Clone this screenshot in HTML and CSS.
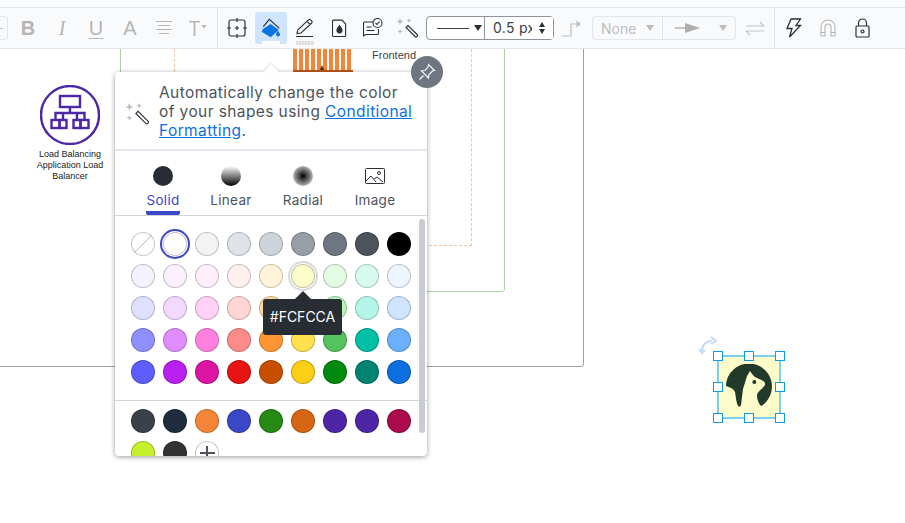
FILE: index.html
```html
<!DOCTYPE html>
<html>
<head>
    <title>Fill Color</title>
    <link rel="stylesheet" href="styles.css">
</head>
<body>
    <div class="top-strip"></div>
    <div class="toolbar">
        <div class="font-stub"><span class="stub-dash"></span></div>
        <div class="group text-group">
            <button class="tool muted bold-letter">B</button>
            <button class="tool muted italic-letter">I</button>
            <button class="tool muted underline-letter">U</button>
            <button class="tool muted plain-letter">A</button>
            <button class="tool muted">
                <svg width="16" height="14" viewBox="0 0 16 14" fill="none" stroke="#b5b5b5"><path d="M0 .5h16M2 4.500h12M0 8.500h16M3 12.500h10"/></svg>
            </button>
            <button class="tool muted">
                <svg width="18" height="16" viewBox="0 0 18 16"><path d="M0 1h11v1.600H6.400V16H4.600V2.600H0z" fill="#b5b5b5"/><path d="M12.500 5h5l-2.500 3.500z" fill="#b5b5b5"/></svg>
            </button>
        </div>
        <div class="group shape-group">
            <button class="tool">
                <svg width="20" height="20" viewBox="0 0 20 20" fill="none" stroke="#2b2f36" stroke-width="1.200"><rect x="2" y="2" width="16" height="16" rx="2"/><path d="M10 0v4M10 16v4M0 10h4M16 10h4M10 8v4M8 10h4"/></svg>
            </button>
            <button class="tool active">
                <svg width="22" height="22" viewBox="0 0 22 22"><path d="M3 12l7.700-5 8 6-8 7.300-9-5.600z" fill="#0b74e5"/><path d="M3.300 9.700l6-7.400 10 9" fill="none" stroke="#2b2f36" stroke-width="1.100"/><path d="M18 14c1.300 1.700 2 2.500 2 3.400a2 2 0 0 1-4 0c0-.9.700-1.700 2-3.400z" fill="#0b74e5"/></svg>
                <span class="fill-chip"></span>
            </button>
            <button class="tool">
                <svg width="20" height="20" viewBox="0 0 20 20" fill="none" stroke="#2b2f36" stroke-width="1.100"><path d="M2 15.500l.8-3.700L13.500 1.800a1.400 1.400 0 0 1 2 0l1.200 1.200a1.400 1.400 0 0 1 0 2L6 15zM12 3.300l3.200 3.200M1 18.500h17"/></svg>
                <span class="stroke-chip"></span>
            </button>
            <button class="tool">
                <svg width="15" height="19" viewBox="0 0 16 20"><path d="M1.500 1h9l4 4v12.500a1 1 0 0 1-1 1h-12a1 1 0 0 1-1-1V2a1 1 0 0 1 1-1z" fill="none" stroke="#2b2f36" stroke-width="1.200"/><path d="M8 6c2.200 2.800 3.300 4.300 3.300 5.900a3.300 3.300 0 0 1-6.600 0C4.700 10.300 5.800 8.800 8 6z" fill="#2b2f36"/></svg>
            </button>
            <button class="tool">
                <svg width="20" height="20" viewBox="0 0 20 20" fill="none" stroke="#2b2f36" stroke-width="1.100"><path d="M10 4H1.500a1 1 0 0 0-1 1v13l2-1.500h12a1 1 0 0 0 1-1V11M3.500 9h5M3.500 12.500h8"/><circle cx="14.500" cy="5" r="4.500"/><path d="M12.500 5l1.500 1.500 2.500-2.800"/></svg>
            </button>
            <button class="tool">
                <svg width="22" height="22" viewBox="0 0 22 22"><path d="M10 10.500l2-2 9 9a1.400 1.400 0 0 1-2 2z" fill="none" stroke="#2b2f36" stroke-width="1.100"/><path d="M4 1l1 2.500L7.500 4.500 5 5.500 4 8 3 5.500.500 4.500 3 3.500zM13 1l.8 1.700L15.500 3.500l-1.700.8L13 6l-.8-1.700-1.700-.8 1.700-.8zM4 12l.8 1.700 1.700.8-1.700.8L4 17l-.8-1.700-1.700-.8 1.700-.8z" fill="#b9bdc3"/></svg>
            </button>
        </div>
        <div class="line-control">
            <div class="line-style"><span class="line-sample"></span><span class="caret dark"></span></div>
            <div class="line-width">0.5 px<span class="spinner"><span class="spin-up"></span><span class="spin-down"></span></span></div>
        </div>
        <button class="tool elbow">
            <svg width="20" height="18" viewBox="0 0 20 18" fill="none" stroke="#bdbdbd" stroke-width="1.200"><path d="M0 17h9V5h6"/><path d="M14.500 1.500L19 5l-4.500 3.500z" fill="#bdbdbd" stroke="none"/></svg>
        </button>
        <div class="ends">
            <div class="end-left">None<span class="caret"></span></div>
            <div class="end-right">
                <svg width="26" height="10" viewBox="0 0 26 10"><path d="M0 4.300h12v1.400H0z" fill="#aeaeae"/><path d="M10 0l15 5-15 5z" fill="#aeaeae"/></svg>
                <span class="caret"></span>
            </div>
        </div>
        <button class="tool swap">
            <svg width="20" height="15" viewBox="0 0 20 15" fill="none" stroke="#c4c4c4" stroke-width="1.100"><path d="M1 5h18l-4-4M19 10H1l4 4"/></svg>
        </button>
        <div class="group right-group">
            <button class="tool">
                <svg width="16" height="20" viewBox="0 0 16 20" fill="none" stroke="#2b2f36" stroke-width="1.300"><path d="M5 1h9.500L10 7.500h4.500L3.500 19 6 10.500H1z"/></svg>
            </button>
            <button class="tool">
                <svg width="16" height="18" viewBox="0 0 16 18" fill="none" stroke="#b5b5b5" stroke-width="1.100"><path d="M1 17V8a7 7 0 0 1 14 0v9h-4V8a3 3 0 0 0-6 0v9zM1 13.500h4M11 13.500h4"/></svg>
            </button>
            <button class="tool">
                <svg width="15" height="20" viewBox="0 0 15 20" fill="none" stroke="#2b2f36" stroke-width="1.200"><rect x="1" y="8" width="13" height="11" rx="1"/><path d="M3.500 8V5a4 4 0 0 1 8 0v3"/><circle cx="7.500" cy="13.500" r="1.500"/></svg>
            </button>
        </div>
    </div>

    <div class="canvas">
        <div class="box box-gray"></div>
        <div class="box box-green"></div>
        <div class="box box-dashed"></div>
        <div class="server-stripes"></div>
        <div class="frontend-label">Frontend</div>

        <div class="lb-node">
            <svg width="60" height="60" viewBox="0 0 60 60" fill="none" stroke="#4d27a8" stroke-width="2.400">
                <circle cx="30" cy="30" r="29"/>
                <rect x="20" y="11" width="20" height="11"/>
                <path d="M30 22v6M30 28H15.500v6M30 28h14.500v6M23 34v-6M37 34v-6"/>
                <rect x="11.500" y="35" width="8" height="8"/>
                <rect x="19.500" y="35" width="7" height="8"/>
                <rect x="33.500" y="35" width="7" height="8"/>
                <rect x="40.500" y="35" width="8" height="8"/>
            </svg>
            <div class="lb-label">Load Balancing Application Load Balancer</div>
        </div>

        <svg class="rotate-handle" width="20" height="20" viewBox="0 0 20 20" fill="none" stroke="#c3dbfa" stroke-width="2"><path d="M4 15C4 9 8 5 14 5"/><path d="M13 1l5 4-5 3M1 13l3 4 3-3"/></svg>
        <div class="selected-shape">
            <svg class="llama" width="46" height="44" viewBox="0 0 46 44">
                <path d="M0 21A23 23 0 1 1 36 41.500L35 42C33 40 31 36 31 32C31 27 37 25 39 21C40 18 36 16 31 14C28 13 26 10 24 7L21 12L17 25L15 41C14 43 13 43 12 42C10 38 10 33 9 28C8 25 5 23.500 0 22Z" fill="#23392a"/>
                <circle cx="28.300" cy="18" r="2" fill="#23392a"/>
            </svg>
            <span class="handle h-tl"></span>
            <span class="handle h-tc"></span>
            <span class="handle h-tr"></span>
            <span class="handle h-ml"></span>
            <span class="handle h-mr"></span>
            <span class="handle h-bl"></span>
            <span class="handle h-bc"></span>
            <span class="handle h-br"></span>
        </div>
    </div>

    <div class="panel">
        <span class="panel-arrow"></span>
        <button class="pin">
            <svg width="18" height="18" viewBox="0 0 18 18" fill="none" stroke="#fff" stroke-width="1.100"><path d="M10.500 1.500l6 6-2 .5-3.500 3.500-.5 3.500-7-7L7 7.500 10 4zM5.500 12.500L1.500 16.500"/></svg>
        </button>
        <div class="panel-body">
            <div class="promo">
                <svg class="promo-icon" width="24" height="24" viewBox="0 0 22 22"><path d="M10 10.500l2-2 9 9a1.400 1.400 0 0 1-2 2z" fill="none" stroke="#2b2f36" stroke-width="1"/><path d="M4 1l1 2.500L7.500 4.500 5 5.500 4 8 3 5.500.500 4.500 3 3.500zM13 1l.8 1.700L15.500 3.500l-1.700.8L13 6l-.8-1.700-1.700-.8 1.700-.8zM4 12l.8 1.700 1.700.8-1.700.8L4 17l-.8-1.700-1.700-.8 1.700-.8z" fill="#b9bdc3"/></svg>
                <p>Automatically change the color of your shapes using <a href="#">Conditional Formatting</a>.</p>
            </div>
            <div class="tabs">
                <div class="tab selected"><span class="tab-icon solid"></span>Solid</div>
                <div class="tab"><span class="tab-icon linear"></span>Linear</div>
                <div class="tab"><span class="tab-icon radial"></span>Radial</div>
                <div class="tab">
                    <svg class="tab-image" width="20" height="20" viewBox="0 0 20 20" fill="none" stroke="#2b2f36" stroke-width="1"><rect x=".5" y="2.500" width="19" height="15" rx="1"/><circle cx="14" cy="7" r="1.500"/><path d="M1 15l5-5 5 6M9 13l3-2 6 5"/></svg>
                    Image
                </div>
            </div>
            <div class="colors">
                <div class="swatches">
                    <span class="swatch none-color"></span>
                    <span class="swatch current" style="background:#fff"></span>
                    <span class="swatch" style="background:#f1f3f5"></span>
                    <span class="swatch" style="background:#dfe3e8"></span>
                    <span class="swatch" style="background:#ced4db"></span>
                    <span class="swatch" style="background:#979ea8"></span>
                    <span class="swatch" style="background:#6f7681"></span>
                    <span class="swatch" style="background:#4c535d"></span>
                    <span class="swatch" style="background:#000"></span>

                    <span class="swatch" style="background:#f2f3ff"></span>
                    <span class="swatch" style="background:#fbf0ff"></span>
                    <span class="swatch" style="background:#ffeffb"></span>
                    <span class="swatch" style="background:#fff0f0"></span>
                    <span class="swatch" style="background:#fff3d9"></span>
                    <span class="swatch hovered" style="background:#fcfcca"></span>
                    <span class="swatch" style="background:#e3fae3"></span>
                    <span class="swatch" style="background:#d6faf0"></span>
                    <span class="swatch" style="background:#edf5ff"></span>

                    <span class="swatch" style="background:#dfe0ff"></span>
                    <span class="swatch" style="background:#f2d9ff"></span>
                    <span class="swatch" style="background:#ffd1f5"></span>
                    <span class="swatch" style="background:#ffd5d5"></span>
                    <span class="swatch" style="background:#ffd9a0"></span>
                    <span class="swatch" style="background:#fff59e"></span>
                    <span class="swatch" style="background:#b8f5b8"></span>
                    <span class="swatch" style="background:#b5f5e8"></span>
                    <span class="swatch" style="background:#cfe4ff"></span>

                    <span class="swatch" style="background:#8f8fff"></span>
                    <span class="swatch" style="background:#e08cff"></span>
                    <span class="swatch" style="background:#ff80df"></span>
                    <span class="swatch" style="background:#ff8a8a"></span>
                    <span class="swatch" style="background:#ff9533"></span>
                    <span class="swatch" style="background:#ffe14d"></span>
                    <span class="swatch" style="background:#54c25e"></span>
                    <span class="swatch" style="background:#00bfa5"></span>
                    <span class="swatch" style="background:#6bb0ff"></span>

                    <span class="swatch" style="background:#5e5eff"></span>
                    <span class="swatch" style="background:#b81ff0"></span>
                    <span class="swatch" style="background:#dc14a3"></span>
                    <span class="swatch" style="background:#e81313"></span>
                    <span class="swatch" style="background:#c94f00"></span>
                    <span class="swatch" style="background:#fccf14"></span>
                    <span class="swatch" style="background:#008a0e"></span>
                    <span class="swatch" style="background:#008573"></span>
                    <span class="swatch" style="background:#0c6fe0"></span>
                </div>
                <div class="divider"></div>
                <div class="swatches">
                    <span class="swatch" style="background:#3a414a"></span>
                    <span class="swatch" style="background:#1f2d3f"></span>
                    <span class="swatch" style="background:#f58536"></span>
                    <span class="swatch" style="background:#3a48c8"></span>
                    <span class="swatch" style="background:#268a15"></span>
                    <span class="swatch" style="background:#d66613"></span>
                    <span class="swatch" style="background:#4d26a8"></span>
                    <span class="swatch" style="background:#4d26a8"></span>
                    <span class="swatch" style="background:#ab0a4d"></span>

                    <span class="swatch" style="background:#c6f02e"></span>
                    <span class="swatch" style="background:#333"></span>
                    <span class="swatch add-color"></span>
                </div>
                <div class="scrollbar"></div>
            </div>
        </div>
        <div class="tooltip">#FCFCCA</div>
    </div>
</body>
</html>
```

FILE: styles.css
```css
html, body {
    margin: 0;
    padding: 0;
}

body {
    width: 905px;
    height: 523px;
    overflow: hidden;
    position: relative;
    background-color: #fff;
    font-family: Inter, "Liberation Sans", sans-serif;
}

button {
    border: none;
    background: none;
    padding: 0;
    font: inherit;
}

.top-strip {
    height: 7px;
    background-color: #fafbfd;
}

/* toolbar */

.toolbar {
    height: 40px;
    display: flex;
    align-items: center;
    background-color: #f9fafc;
    border-top: 1px solid #e3e6ec;
    border-bottom: 1px solid #e3e6ec;
}

.font-stub {
    width: 8px;
    height: 24px;
    flex: none;
    display: flex;
    align-items: center;
    border: 1px solid #e3e6ec;
    border-left: none;
    border-radius: 0 4px 4px 0;
    box-sizing: border-box;
}

.stub-dash {
    width: 3px;
    height: 1px;
    background-color: #bbb;
}

.group {
    display: flex;
    align-items: center;
    height: 40px;
}

.text-group {
    width: 206px;
    padding-left: 3px;
    border-right: 1px solid #e3e6ec;
}

.shape-group {
    padding-left: 2px;
    margin-right: 2px;
}

.tool {
    width: 34px;
    height: 32px;
    flex: none;
    position: relative;
    display: flex;
    align-items: center;
    justify-content: center;
    border-radius: 3px;
}

.muted {
    color: #b5b5b5;
    font-size: 20px;
    font-family: "Liberation Sans", sans-serif;
}

.bold-letter {
    font-weight: bold;
}

.italic-letter {
    font-style: italic;
    font-family: "Liberation Serif", serif;
}

.underline-letter {
    text-decoration: underline;
    text-underline-offset: 3px;
    text-decoration-thickness: 1px;
}

.active {
    width: 32px;
    margin: 0 1px;
    background-color: #cfe4ff;
}

.fill-chip {
    position: absolute;
    left: 7px;
    bottom: 0;
    width: 18px;
    height: 3px;
    background-color: #fff;
}

.stroke-chip {
    position: absolute;
    left: 8px;
    bottom: -1px;
    width: 18px;
    height: 4px;
    background: repeating-linear-gradient(90deg, #dcdcdc 0, #dcdcdc 2px, #eee 2px, #eee 3px);
}

.line-control {
    width: 126px;
    height: 22px;
    flex: none;
    display: flex;
    border: 1px solid #8e939c;
    border-radius: 4px;
    background-color: #fff;
}

.line-style {
    width: 58px;
    flex: none;
    display: flex;
    align-items: center;
    box-sizing: border-box;
    padding-left: 10px;
    border-right: 1px solid #8e939c;
}

.line-sample {
    width: 32px;
    height: 1px;
    background-color: #3a3f46;
    margin-right: 5px;
}

.line-width {
    flex: 1;
    position: relative;
    overflow: hidden;
    padding-left: 8px;
    font-size: 14px;
    letter-spacing: 0.3px;
    line-height: 22px;
    color: #3a3f46;
    white-space: nowrap;
}

.spinner {
    position: absolute;
    right: 0;
    top: 0;
    width: 21px;
    height: 22px;
    background-color: #fff;
}

.spin-up, .spin-down {
    position: absolute;
    left: 7px;
    border-left: 3.500px solid transparent;
    border-right: 3.500px solid transparent;
}

.spin-up {
    top: 5px;
    border-bottom: 5px solid #2b2f36;
}

.spin-down {
    top: 12px;
    border-top: 5px solid #2b2f36;
}

.caret {
    display: inline-block;
    width: 0;
    height: 0;
    border-left: 4.500px solid transparent;
    border-right: 4.500px solid transparent;
    border-top: 6px solid #bdbdbd;
}

.caret.dark {
    border-top-color: #2b2f36;
}

.elbow {
    width: 32px;
    margin-left: 2px;
}

.ends {
    width: 142px;
    height: 22px;
    flex: none;
    display: flex;
    margin-left: 4px;
    border: 1px solid #e3e6ec;
    border-radius: 4px;
    font-size: 14px;
    color: #bdbdbd;
}

.end-left {
    width: 70px;
    flex: none;
    display: flex;
    align-items: center;
    justify-content: space-between;
    box-sizing: border-box;
    padding: 0 8px;
    border-right: 1px solid #e3e6ec;
}

.end-right {
    flex: 1;
    display: flex;
    align-items: center;
    justify-content: space-between;
    padding: 0 8px 0 12px;
}

.swap {
    margin: 0 2px;
}

.right-group {
    padding-left: 2px;
    border-left: 1px solid #e3e6ec;
}

/* canvas behind the panel */

.canvas {
    position: absolute;
    left: 0;
    top: 49px;
    width: 905px;
    height: 474px;
    overflow: hidden;
}

.box {
    position: absolute;
    box-sizing: border-box;
}

.box-gray {
    left: -20px;
    top: -20px;
    width: 604px;
    height: 338px;
    border: 1px solid #9a9fa6;
    border-radius: 3px;
}

.box-green {
    left: 120px;
    top: -20px;
    width: 385px;
    height: 263px;
    border: 1px solid #a5d6a0;
    border-radius: 3px;
}

.box-dashed {
    left: 174px;
    top: -20px;
    width: 298px;
    height: 217px;
    border: 1px dashed #f5c3a0;
}

.server-stripes {
    position: absolute;
    left: 293px;
    top: 0;
    width: 60px;
    height: 21px;
    border-bottom: 2px solid #c0591a;
    background: repeating-linear-gradient(90deg, #f58536 0, #f58536 4px, #fff 4px, #fff 6px);
}

.server-stripes::after {
    content: "";
    position: absolute;
    left: 27px;
    bottom: 0;
    width: 0;
    height: 0;
    border-left: 2px solid transparent;
    border-right: 2px solid transparent;
    border-bottom: 5px solid #333;
}

.frontend-label {
    position: absolute;
    left: 372px;
    top: 0;
    font-family: "Liberation Sans", sans-serif;
    font-size: 11px;
    line-height: 12px;
    color: #444;
}

.lb-node {
    position: absolute;
    left: 30px;
    top: 36px;
    width: 80px;
    display: flex;
    flex-direction: column;
    align-items: center;
}

.lb-label {
    margin-top: 4px;
    font-family: "Liberation Sans", sans-serif;
    font-size: 9px;
    line-height: 11px;
    color: #222;
    text-align: center;
}

.rotate-handle {
    position: absolute;
    left: 698px;
    top: 287px;
}

.selected-shape {
    position: absolute;
    left: 717px;
    top: 306px;
    width: 60px;
    height: 60px;
    background-color: #fcfcca;
    border: 2px solid #7fd0ee;
    display: flex;
    align-items: center;
    justify-content: center;
}

.llama {
    display: block;
    margin-bottom: 3px;
}

.handle {
    position: absolute;
    width: 10px;
    height: 10px;
    box-sizing: border-box;
    background-color: #fff;
    border: 1.500px solid #0f9ce0;
}

.h-tl { left: -6px; top: -6px; }
.h-tc { left: 25px; top: -6px; }
.h-tr { right: -6px; top: -6px; }
.h-ml { left: -6px; top: 25px; }
.h-mr { right: -6px; top: 25px; }
.h-bl { left: -6px; bottom: -6px; }
.h-bc { left: 25px; bottom: -6px; }
.h-br { right: -6px; bottom: -6px; }

/* fill colour panel */

.panel {
    position: absolute;
    left: 115px;
    top: 72px;
    width: 312px;
    height: 384px;
    background-color: #fff;
    border-radius: 4px;
    box-shadow: 0 1px 5px rgba(0, 0, 0, 0.4);
}

.panel-arrow {
    position: absolute;
    left: 148px;
    top: -8px;
    width: 0;
    height: 0;
    border-left: 8px solid transparent;
    border-right: 8px solid transparent;
    border-bottom: 8px solid #fff;
    filter: drop-shadow(0 -1px 1px rgba(0, 0, 0, 0.15));
}

.pin {
    position: absolute;
    right: -16px;
    top: -16px;
    width: 32px;
    height: 32px;
    z-index: 2;
    display: flex;
    align-items: center;
    justify-content: center;
    border-radius: 50%;
    background-color: #6f7681;
}

.panel-body {
    height: 384px;
    overflow: hidden;
    border-radius: 4px;
}

.promo {
    height: 79px;
    display: flex;
    box-sizing: border-box;
    padding: 11px 0 0 10px;
    border-bottom: 2px solid #e3e6ec;
}

.promo-icon {
    flex: none;
    margin: 19px 10px 0 0;
}

.promo p {
    width: 256px;
    margin: 0;
    font-size: 15.500px;
    line-height: 19px;
    letter-spacing: 0.4px;
    color: #4c535d;
}

.promo a {
    color: #0c6fe0;
}

.tabs {
    height: 65px;
    display: flex;
    box-sizing: border-box;
    padding: 15px 0 0 14px;
    border-bottom: 1px solid #ced4db;
}

.tab {
    width: 72px;
    height: 49px;
    display: flex;
    flex-direction: column;
    align-items: center;
    font-size: 13.500px;
    letter-spacing: 0.3px;
    line-height: 16px;
    color: #4c535d;
}

.tab.selected {
    color: #3a48c8;
    border-bottom: 4px solid #3a48c8;
    width: 34px;
    margin: 0 15px 0 17px;
    border-radius: 0 0 2px 2px;
    height: 45px;
}

.tab-icon {
    width: 20px;
    height: 20px;
    margin-bottom: 6px;
    border-radius: 50%;
    flex: none;
}

.tab-image {
    margin-bottom: 6px;
    flex: none;
}

.solid {
    background-color: #282c33;
}

.linear {
    background: linear-gradient(#fff, #000);
}

.radial {
    background: radial-gradient(circle, #000 0, #fff 100%);
}

.colors {
    height: 240px;
    position: relative;
    overflow: hidden;
    padding: 0 16px;
}

.swatches {
    display: grid;
    grid-template-columns: repeat(9, 24px);
    gap: 8px;
    padding-top: 16px;
}

.swatch {
    width: 24px;
    height: 24px;
    box-sizing: border-box;
    border: 1px solid rgba(0, 0, 0, 0.22);
    border-radius: 50%;
}

.none-color {
    background: linear-gradient(135deg, transparent 49%, #bbb 49%, #bbb 52%, transparent 52%) #fff;
}

.current {
    box-shadow: 0 0 0 1px #fff, 0 0 0 3px #3a48c8;
}

.hovered {
    box-shadow: 0 0 0 1px #fff, 0 0 0 3px #d5dae0;
}

.add-color {
    background:
        linear-gradient(#4c535d, #4c535d) center / 15px 2px no-repeat,
        linear-gradient(#4c535d, #4c535d) center / 2px 15px no-repeat,
        #fff;
}

.divider {
    margin: 16px -16px 0;
    border-top: 1px solid #ced4db;
}

.divider + .swatches {
    padding-top: 8px;
}

.scrollbar {
    position: absolute;
    right: 2px;
    top: 3px;
    width: 6px;
    height: 214px;
    border-radius: 3px;
    background-color: #c9cdd3;
}

.tooltip {
    position: absolute;
    left: 148px;
    top: 227px;
    width: 79px;
    height: 36px;
    border-radius: 3px;
    background-color: #282c33;
    color: #fff;
    font-size: 14px;
    line-height: 36px;
    text-align: center;
    z-index: 3;
}

.tooltip::before {
    content: "";
    position: absolute;
    left: 32px;
    top: -8px;
    width: 0;
    height: 0;
    border-left: 8px solid transparent;
    border-right: 8px solid transparent;
    border-bottom: 8px solid #282c33;
}
```
